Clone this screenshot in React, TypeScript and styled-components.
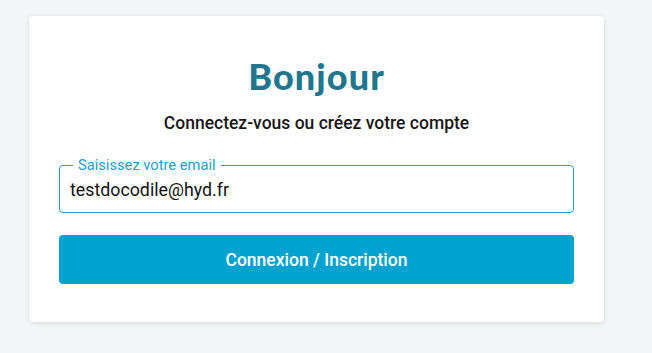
import React from 'react';
import styled, {createGlobalStyle} from "styled-components";

const GlobalStyle = createGlobalStyle`
    * {
        box-sizing: border-box;
    }
    body {
        margin: 0;
        background-color: #f3f6f7;
        font-family: Roboto, "Liberation Sans", sans-serif;
    }
`

export default function App() {
    return (
        <>
            <GlobalStyle/>
            <Page>
                <Card>
                    <Title>Bonjour</Title>
                    <Subtitle>Connectez-vous ou créez votre compte</Subtitle>
                    <Form onSubmit={(e) => e.preventDefault()}>
                        <Field>
                            <Label htmlFor="email">Saisissez votre email</Label>
                            <Input id="email" type="email" defaultValue="testdocodile@hyd.fr"/>
                        </Field>
                        <SubmitButton type="submit">Connexion / Inscription</SubmitButton>
                    </Form>
                </Card>
            </Page>
        </>
    );
};

const Page = styled.main`
    min-height: 100vh;
    padding: 16px 0 0 29px;
`

const Card = styled.section`
    width: 575px;
    height: 306px;
    padding: 38px 30px 38px;
    background-color: #ffffff;
    border-radius: 4px;
    box-shadow: 0 1px 5px rgba(0, 0, 0, 0.13);
    display: flex;
    flex-direction: column;
    align-items: center;
`

const Title = styled.h1`
    margin: 0;
    font-family: Lato, "Noto Sans", sans-serif;
    font-size: 36px;
    font-weight: 900;
    line-height: 44px;
    color: #21768e;
    letter-spacing: 1.1px;
`

const Subtitle = styled.p`
    margin: 13px 0 0;
    font-size: 17.5px;
    font-weight: 500;
    line-height: 24px;
    color: #161616;
`

const Form = styled.form`
    width: 100%;
    margin-top: 30px;
    display: flex;
    flex-direction: column;
    gap: 22px;
`

const Field = styled.div`
    position: relative;
    height: 48px;
    border: 1px solid #1a9fd0;
    border-radius: 4px;
`

const Label = styled.label`
    position: absolute;
    top: -10px;
    left: 13px;
    padding: 0 5px;
    background-color: #ffffff;
    font-size: 14.7px;
    line-height: 18px;
    color: #1b9ed0;
`

const Input = styled.input`
    width: 100%;
    height: 100%;
    padding: 0 10px;
    border: none;
    outline: none;
    background: transparent;
    font-family: Roboto, "Liberation Sans", sans-serif;
    font-size: 17.8px;
    color: #111111;
`

const SubmitButton = styled.button`
    height: 49px;
    border: none;
    border-radius: 4px;
    background-color: #00a3cf;
    color: #ffffff;
    font-family: Roboto, "Liberation Sans", sans-serif;
    font-size: 17.5px;
    font-weight: 500;
    cursor: pointer;
`
